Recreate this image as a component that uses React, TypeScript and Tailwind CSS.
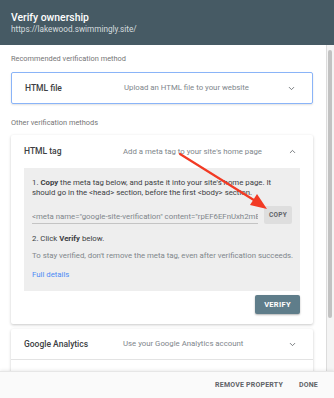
import { ChevronDown, ChevronUp } from 'lucide-react';

function MethodRow({ title, desc, open }: { title: string; desc: string; open?: boolean }) {
    return (
        <div className="flex items-center h-[30px] pl-[13px] pr-[16px]">
            <span className="w-[99px] text-[8.5px] font-medium text-[#3c4043]">{title}</span>
            <span className="flex-1 text-[7.8px] text-[#80868b]">{desc}</span>
            {open ? (
                <ChevronUp size={9} strokeWidth={2.2} className="text-[#5f6368]" />
            ) : (
                <ChevronDown size={9} strokeWidth={2.2} className="text-[#5f6368]" />
            )}
        </div>
    );
}

export default function App() {
    return (
        <div className="relative w-[334px] h-[398px] flex flex-col overflow-hidden bg-white font-['Roboto',sans-serif]">
            <div className="h-[45px] shrink-0 bg-[#465a64] px-[11px] pt-[11px]">
                <div className="text-[10.4px] leading-[13px] font-medium text-white">Verify ownership</div>
                <div className="text-[8.2px] leading-[11px] text-[#d5dcdf]">https://lakewood.swimmingly.site/</div>
            </div>

            <div className="flex h-[326px] shrink-0">
                <div className="flex-1 overflow-hidden pl-[11px] pr-[13px]">
                    <div className="pt-[9px] text-[7.4px] leading-[10px] text-[#757575]">Recommended verification method</div>
                    <div className="mt-[8px] rounded-[2px] border border-[#8ab4f8] shadow-[0_1px_2px_rgba(0,0,0,0.12)]">
                        <MethodRow title="HTML file" desc="Upload an HTML file to your website" />
                    </div>

                    <div className="mt-[14px] text-[7.4px] leading-[10px] text-[#757575]">Other verification methods</div>
                    <div className="mt-[7px] rounded-[2px] bg-white shadow-[0_1px_3px_rgba(0,0,0,0.22)] pb-[10px]">
                        <div className="h-[33px] flex items-center">
                            <div className="flex-1">
                                <MethodRow title="HTML tag" desc="Add a meta tag to your site's home page" open />
                            </div>
                        </div>
                        <div className="mx-[13px] bg-[#eeeeee] px-[8px] pt-[10px] pb-[11px] text-[7.8px] leading-[10px] text-[#3c4043]">
                            <p>
                                1. <b>Copy</b> the meta tag below, and paste it into your site's home page. It
                                <br />
                                should go in the &lt;head&gt; section, before the first &lt;body&gt; section.
                            </p>
                            <div className="mt-[8px] flex items-end gap-[6px]">
                                <div className="flex-1 overflow-hidden text-clip whitespace-nowrap border-b border-[#c4c4c4] pb-[1px] text-[#80868b]">
                                    &lt;meta name="google-site-verification" content="rpEF6EFnUxh2mEt
                                </div>
                                <button className="h-[18px] w-[28px] rounded-[2px] bg-[#dedede] text-[6.5px] font-bold tracking-[0.3px] text-[#5f6368]">
                                    COPY
                                </button>
                            </div>
                            <p className="mt-[10px]">
                                2. Click <b>Verify</b> below.
                            </p>
                            <p className="mt-[7px] whitespace-nowrap text-[#80868b]">
                                To stay verified, don't remove the meta tag, even after verification succeeds.
                            </p>
                            <p className="mt-[9px] text-[#4c8bf5]">Full details</p>
                        </div>
                        <div className="mt-[4px] mr-[13px] flex justify-end">
                            <button className="h-[19px] w-[45px] rounded-[2px] bg-[#5f7d8a] text-[7.5px] font-bold tracking-[0.3px] text-white shadow-[0_1px_2px_rgba(0,0,0,0.3)]">
                                VERIFY
                            </button>
                        </div>
                    </div>

                    <div className="mt-[5px] rounded-[2px] bg-white shadow-[0_1px_3px_rgba(0,0,0,0.22)]">
                        <MethodRow title="Google Analytics" desc="Use your Google Analytics account" />
                        <div className="border-t border-[#e3e3e3] h-[30px]" />
                    </div>
                </div>
                <div className="w-[8px] shrink-0 bg-[#f4f4f4] border-l border-[#dcdcdc] pt-[5px] pl-[1px] pr-[2px]">
                    <div className="h-[268px] rounded-[2px] bg-[#c2c2c2]" />
                </div>
            </div>

            <div className="flex-1 flex items-center justify-end gap-[16px] pr-[16px] bg-[#fafafa] border-t border-[#e6e6e6] shadow-[0_-1px_3px_rgba(0,0,0,0.08)] text-[7px] font-bold tracking-[0.2px] text-[#5f6368]">
                <span>REMOVE PROPERTY</span>
                <span>DONE</span>
            </div>

            {/* red annotation arrow */}
            <svg className="absolute left-0 top-0 pointer-events-none" width="334" height="398">
                <line x1="180" y1="154" x2="257" y2="202" stroke="#f23a24" strokeWidth="2.2" strokeLinecap="round" />
                <polygon points="267,209 250,205 257,194" fill="#f23a24" />
            </svg>
        </div>
    );
}
